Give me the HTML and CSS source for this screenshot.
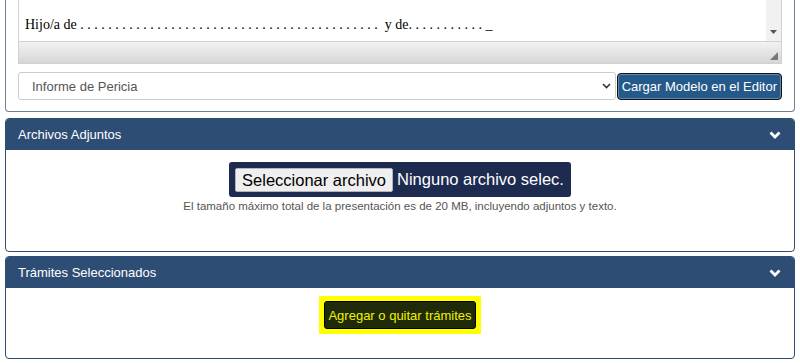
FILE: index.html
```html
<!DOCTYPE html>
<html lang="es">
  <head>
    <meta charset="UTF-8">
    <meta name="viewport" content="width=device-width, initial-scale=1.0">
    <title>Presentación</title>
    <link rel="stylesheet" href="styles.css">
  </head>
  <body>
    <div class="page">
      <section class="panel panel-open">
        <div class="editor">
          <div class="editor-area">
            <p class="editor-text">Hijo/a de . . . . . . . . . . . . . . . . . . . . . . . . . . . . . . . . . . . . . . . . . . .&nbsp; y de. . . . . . . . . . . _</p>
            <div class="editor-scroll">
              <svg width="7" height="4" viewBox="0 0 7 4"><polygon points="0,0 7,0 3.5,4" fill="#555"/></svg>
            </div>
          </div>
          <div class="editor-status">
            <svg width="8" height="8" viewBox="0 0 8 8"><polygon points="8,0 8,8 0,8" fill="#777"/></svg>
          </div>
        </div>
        <div class="model-row">
          <div class="select">
            <span>Informe de Pericia</span>
            <svg width="9" height="6" viewBox="0 0 9 6"><polyline points="1,1 4.5,4.5 8,1" fill="none" stroke="#333" stroke-width="1.6"/></svg>
          </div>
          <button class="btn-load">Cargar Modelo en el Editor</button>
        </div>
      </section>

      <section class="panel panel-attach">
        <div class="panel-head">
          <span>Archivos Adjuntos</span>
          <svg width="12" height="8" viewBox="0 0 12 8"><polyline points="1.5,1.5 6,6 10.5,1.5" fill="none" stroke="#fff" stroke-width="2.8"/></svg>
        </div>
        <div class="panel-body attach-body">
          <div class="file-box">
            <span class="file-btn">Seleccionar archivo</span>
            <span class="file-name">Ninguno archivo selec.</span>
          </div>
          <p class="hint">El tamaño máximo total de la presentación es de 20 MB, incluyendo adjuntos y texto.</p>
        </div>
      </section>

      <section class="panel panel-tramites">
        <div class="panel-head">
          <span>Trámites Seleccionados</span>
          <svg width="12" height="8" viewBox="0 0 12 8"><polyline points="1.5,1.5 6,6 10.5,1.5" fill="none" stroke="#fff" stroke-width="2.8"/></svg>
        </div>
        <div class="panel-body tramites-body">
          <span class="highlight">
            <button class="btn-tramites">Agregar o quitar trámites</button>
          </span>
        </div>
      </section>
    </div>
  </body>
</html>
```

FILE: styles.css
```css
body {
  margin: 0;
  background: #fff;
  font-family: "Liberation Sans", Arial, sans-serif;
}
.page {
  padding: 0 5px;
  display: flex;
  flex-direction: column;
}
.panel {
  border: 1px solid #2e4d74;
  border-radius: 4px;
  background: #fff;
}
.panel-open {
  border-color: #6d819c;
  border-top: 0;
  border-radius: 0 0 4px 4px;
  padding: 0 12px 11px 12px;
}
.panel-attach {
  margin-top: 6px;
}
.panel-tramites {
  margin-top: 4px;
}

/* editor */
.editor {
  border: 1px solid #d1d1d1;
  border-top: 0;
}
.editor-area {
  display: flex;
  height: 41px;
  border-bottom: 1px solid #d1d1d1;
}
.editor-text {
  flex: 1;
  margin: 0;
  padding: 17px 0 0 6px;
  font-family: "Liberation Serif", "Times New Roman", serif;
  font-size: 14px;
  color: #000;
  white-space: nowrap;
  overflow: hidden;
}
.editor-scroll {
  width: 15px;
  background: #f1f1f1;
  display: flex;
  align-items: flex-end;
  justify-content: center;
  padding-bottom: 7px;
  box-sizing: border-box;
}
.editor-status {
  height: 21px;
  background: linear-gradient(#f2f2f2, #d6d6d6);
  display: flex;
  align-items: flex-end;
  justify-content: flex-end;
  padding: 0 3px 3px 0;
  box-sizing: border-box;
}

.model-row {
  display: flex;
  align-items: center;
  margin-top: 8px;
}
.select {
  flex: 1;
  height: 28px;
  border: 1px solid #ccc;
  border-radius: 3px;
  box-sizing: border-box;
  display: flex;
  align-items: center;
  justify-content: space-between;
  padding: 0 4px 0 13px;
  font-size: 13px;
  color: #555;
}
.btn-load {
  height: 27px;
  margin-left: 1px;
  padding: 0 4px;
  background: #24598a;
  color: #fff;
  border: 1px solid #111;
  border-radius: 4px;
  box-shadow: inset 0 0 0 1px #5f8ab3;
  font-family: "Liberation Sans", Arial, sans-serif;
  font-size: 13px;
}

/* panels */
.panel-head {
  height: 31px;
  background: #2e4d74;
  color: #fff;
  font-size: 13px;
  display: flex;
  align-items: center;
  justify-content: space-between;
  padding: 0 13px 0 12px;
  border-radius: 3px 3px 0 0;
}
.attach-body {
  height: 101px;
  display: flex;
  flex-direction: column;
  align-items: center;
  padding-top: 12px;
  box-sizing: border-box;
}
.file-box {
  display: flex;
  align-items: center;
  gap: 4px;
  height: 35px;
  padding: 0 6px;
  background: #1c2b4f;
  border-radius: 3px;
  font-size: 16.5px;
  color: #fff;
}
.file-btn {
  background: #efefef;
  color: #000;
  border: 1px solid #b5b5b5;
  border-radius: 2px;
  padding: 1px 6px;
  height: 24px;
  box-sizing: border-box;
  line-height: 21px;
}
.file-name {
  padding-right: 1px;
}
.hint {
  margin: 3px 0 0;
  font-size: 11.5px;
  color: #555;
}
.tramites-body {
  height: 70px;
  display: flex;
  justify-content: center;
  align-items: flex-start;
  padding-top: 8px;
  box-sizing: border-box;
}
.highlight {
  display: flex;
  padding: 5px;
  background: #ffff00;
}
.btn-tramites {
  height: 28px;
  padding: 0 3px;
  background: #1f2a08;
  color: #f2f200;
  border: 1px solid #000;
  border-radius: 3px;
  font-family: "Liberation Sans", Arial, sans-serif;
  font-size: 13px;
}
```
